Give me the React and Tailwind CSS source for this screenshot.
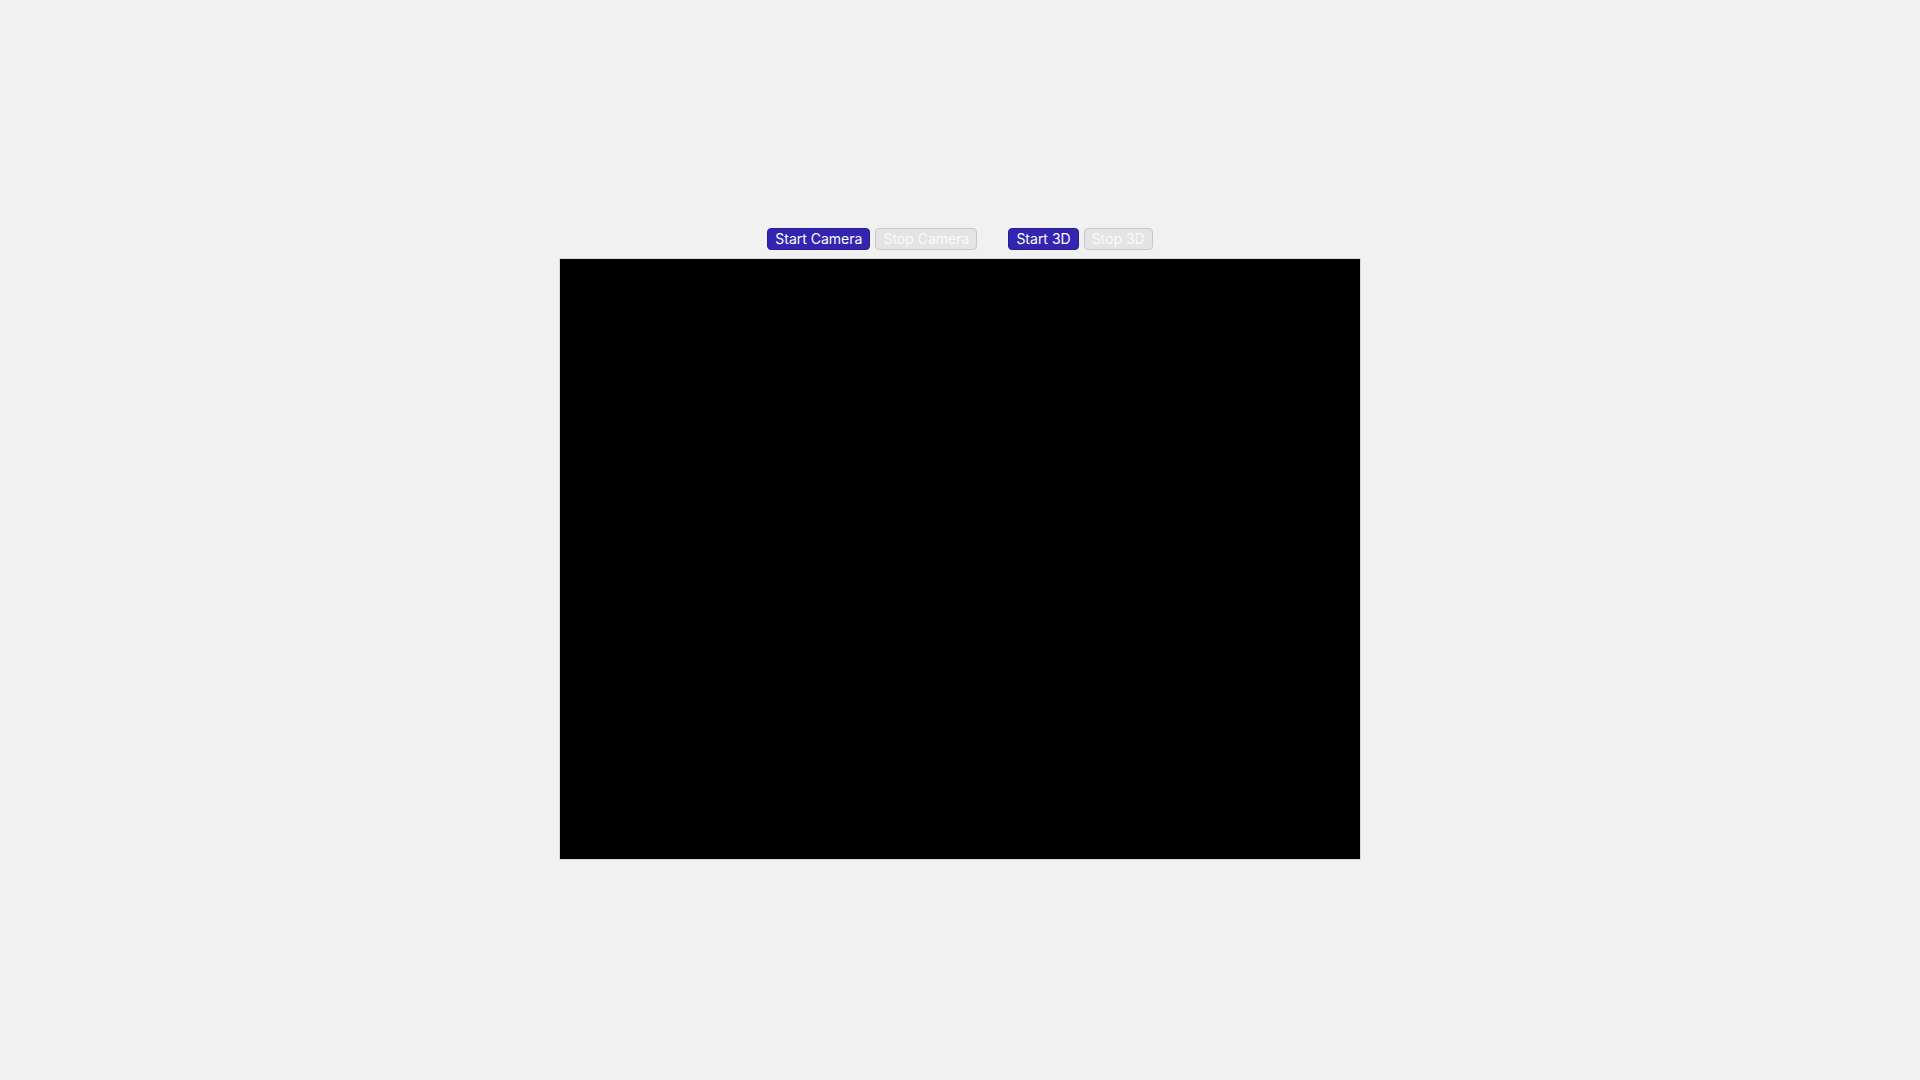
import React from "react";

function App() {
  return (
    <div className="min-h-screen bg-[#f1f1f1] flex flex-col items-center justify-center pt-[8px] font-['Inter',sans-serif]">
      {/* Controls */}
      <div className="flex items-center h-[22px] mb-[8px]">
        <button className="h-[22px] px-[7px] text-[14px] leading-none text-white bg-[#3325b1] border border-[#2a1e93] rounded-[4px]">
          Start Camera
        </button>
        <button disabled className="ml-[5px] h-[22px] px-[7px] text-[14px] leading-none text-[#fafafa] bg-[#e4e4e4] border border-[#c8c8c8] rounded-[4px]">
          Stop Camera
        </button>
        <button className="ml-[31px] h-[22px] px-[7px] text-[14px] leading-none text-white bg-[#3325b1] border border-[#2a1e93] rounded-[4px]">
          Start 3D
        </button>
        <button disabled className="ml-[5px] h-[22px] px-[7px] text-[14px] leading-none text-[#fafafa] bg-[#e4e4e4] border border-[#c8c8c8] rounded-[4px]">
          Stop 3D
        </button>
      </div>

      {/* Video canvas */}
      <div className="w-[802px] h-[602px] bg-black border border-[#d8d8d8]" />
    </div>
  );
}

export default App;
